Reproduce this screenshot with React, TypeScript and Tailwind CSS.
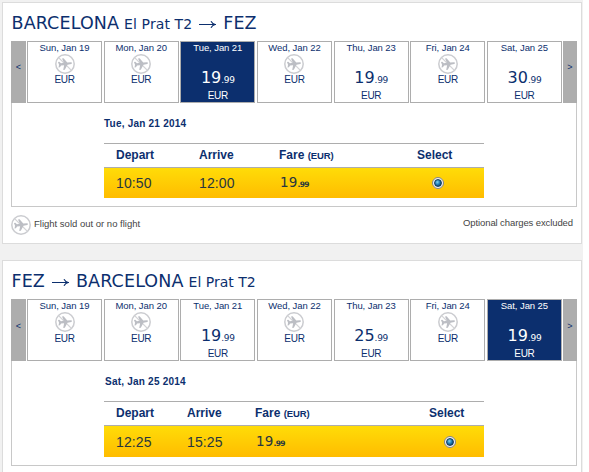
import React, { useState } from "react";
import clsx from "clsx";

type Day = { label: string; whole?: string; cents?: string };

type Leg = {
  id: string;
  title: React.ReactNode;
  days: Day[];
  selected: number;
  date: string;
  depart: string;
  arrive: string;
  fare: string;
};

const Big = ({ children }: { children: string }) => (
  <span className="text-[17.5px] tracking-[0.12px]">{children}</span>
);

const Arrow = () => (
  <svg
    className="mx-[7px] mb-[1px] inline-block h-[9px] w-[17px] align-baseline"
    viewBox="0 0 17 9"
    fill="none"
    stroke="#0c2f6e"
    strokeWidth="1.2"
  >
    <path d="M0 4.5H16M12 1.2C13 3 14.4 4 16.2 4.5C14.4 5 13 6 12 7.8" />
  </svg>
);

const legs: Leg[] = [
  {
    id: "out",
    title: (
      <>
        <Big>BARCELONA</Big>
        <span className="ml-[5px] tracking-[0.1px]">El Prat T2</span>
        <Arrow />
        <Big>FEZ</Big>
      </>
    ),
    days: [
      { label: "Sun, Jan 19" },
      { label: "Mon, Jan 20" },
      { label: "Tue, Jan 21", whole: "19", cents: ".99" },
      { label: "Wed, Jan 22" },
      { label: "Thu, Jan 23", whole: "19", cents: ".99" },
      { label: "Fri, Jan 24" },
      { label: "Sat, Jan 25", whole: "30", cents: ".99" },
    ],
    selected: 2,
    date: "Tue, Jan 21 2014",
    depart: "10:50",
    arrive: "12:00",
    fare: "19",
  },
  {
    id: "back",
    title: (
      <>
        <Big>FEZ</Big>
        <Arrow />
        <Big>BARCELONA</Big>
        <span className="ml-[5px]">El Prat T2</span>
      </>
    ),
    days: [
      { label: "Sun, Jan 19" },
      { label: "Mon, Jan 20" },
      { label: "Tue, Jan 21", whole: "19", cents: ".99" },
      { label: "Wed, Jan 22" },
      { label: "Thu, Jan 23", whole: "25", cents: ".99" },
      { label: "Fri, Jan 24" },
      { label: "Sat, Jan 25", whole: "19", cents: ".99" },
    ],
    selected: 6,
    date: "Sat, Jan 25 2014",
    depart: "12:25",
    arrive: "15:25",
    fare: "19",
  },
];

const NoFlight = () => (
  <svg className="size-5 shrink-0" viewBox="0 0 20 20">
    <circle cx="10" cy="10" r="9.2" fill="#fff" stroke="#cbccd0" strokeWidth="1.5" />
    <path d="M3.6 3.6L16.4 16.4" stroke="#d3d4d7" strokeWidth="1.3" />
    <path
      fill="#bcbec4"
      d="M16.2 8.9C17.3 9 17.3 10.4 16.2 10.6L12.4 11L9.2 15.8H7.6L9 11.2L6 11L4.6 12.7H3.2L4 10L3.2 7.2H4.6L6 8.8L9 8.7L7.6 4.2H9.2L12.4 8.8Z"
      transform="rotate(-6 10 10)"
    />
  </svg>
);

const DayCell = ({
  day,
  active,
  low,
  onClick,
}: {
  day: Day;
  active: boolean;
  low: boolean;
  onClick: () => void;
}) => (
  <button
    onClick={onClick}
    className={clsx(
      "flex w-[75px] flex-col items-center border border-[#adadad] text-[10px] whitespace-nowrap",
      active ? "bg-[#0c2f6e] text-white" : "bg-white text-[#0c2f6e]"
    )}
  >
    <span className="h-3 text-[9.5px] leading-[12px] tracking-[-0.08px]">{day.label}</span>
    {day.whole ? (
      <>
        <span className="h-[29px] pt-[14px] font-['DejaVu_Sans',sans-serif] text-[16px] leading-[19px]">
          {day.whole}
          <span className="text-[9px] tracking-[-0.3px]">{day.cents}</span>
        </span>
        <span className="h-[18px] pt-[7px] leading-[12px] tracking-[-0.3px]">EUR</span>
      </>
    ) : (
      <>
        <NoFlight />
        <span className={clsx("leading-[12px] tracking-[-0.3px]", low && "pt-px")}>EUR</span>
      </>
    )}
  </button>
);

const FlightTable = ({ leg, first }: { leg: Leg; first: boolean }) => {
  const cols = first
    ? "grid-cols-[83px_80px_138px_1fr]"
    : "grid-cols-[71px_68px_174px_1fr]";
  return (
    <div className="ml-[92px] w-[380px] border-t border-[#adadad] text-[#0c2f6e]">
      <div
        className={clsx(
          "grid h-6 border-b border-[#adadad] pl-3 text-[12px] leading-[23px] font-bold",
          cols
        )}
      >
        <span>Depart</span>
        <span>Arrive</span>
        <span>
          Fare <span className="text-[9.5px] tracking-[-0.1px]">(EUR)</span>
        </span>
        <span>Select</span>
      </div>
      <div
        className={clsx(
          "grid bg-linear-to-b from-[#ffdc08] to-[#ffbc00] pl-3 text-[14px] tracking-[0.1px] text-[#27363f]",
          first ? "h-[30px] leading-[31px]" : "h-[31px] leading-[32px]",
          cols
        )}
      >
        <span>{leg.depart}</span>
        <span>{leg.arrive}</span>
        <span className="-mt-px pl-px font-['DejaVu_Sans',sans-serif] text-[13.5px]">
          {leg.fare}
          <span className="text-[7.5px] font-bold tracking-[-0.6px]">.99</span>
        </span>
        <span
          className={clsx("flex items-center pl-[15px]", first ? "h-[30px]" : "h-[32px]")}
        >
          <span className="flex size-3 items-center justify-center rounded-full border border-[#858585] bg-[#f4f4f4]">
            <span className="size-2 rounded-full border border-[#123b5c] bg-radial-[at_40%_35%] from-[#7fd3f3] via-[#1773ad] to-[#0a2742]" />
          </span>
        </span>
      </div>
    </div>
  );
};

const LegPanel = ({ leg, first }: { leg: Leg; first: boolean }) => {
  const [selected, setSelected] = useState(leg.selected);
  const nav = clsx(
    "flex items-center justify-center bg-[#adadad] text-[9px] text-[#0c2f6e]",
    first ? "pb-[9px]" : "pb-[7px]"
  );
  return (
    <section
      className={clsx(
        "ml-[2px] w-[580px] border border-[#dcdcdc] bg-white pl-2",
        first ? "h-[242px]" : "mt-[16px] h-[240px]"
      )}
    >
      <h2 className="flex h-[38px] items-baseline pl-[0.5px] font-['DejaVu_Sans',sans-serif] text-[14px] leading-[40px] text-[#0c2f6e]">
        {leg.title}
      </h2>
      <div
        className={clsx(
          "w-[566px] border border-t-0 border-[#c8c8c8]",
          first ? "h-[166px]" : "h-[167px]"
        )}
      >
        <div className="-mx-px flex h-[62px] justify-between">
          <button className={clsx(nav, "w-[15px]")}>&lt;</button>
          <div className="flex w-[535px] justify-between">
            {leg.days.map((day, i) => (
              <DayCell
                key={day.label}
                day={day}
                active={i === selected}
                low={!first}
                onClick={() => setSelected(i)}
              />
            ))}
          </div>
          <button className={clsx(nav, "w-[14px]")}>&gt;</button>
        </div>
        <p
          className={clsx(
            "mt-[14px] mb-[12px] h-[14px] text-[10px] leading-[14px] font-bold tracking-[0.22px] text-[#0c2f6e]",
            first ? "ml-[92px]" : "ml-[93px]"
          )}
        >
          {leg.date}
        </p>
        <FlightTable leg={leg} first={first} />
      </div>
      {first && (
        <div className="mt-[8px] flex w-[562px] items-center justify-between text-[9.5px] text-[#444]">
          <span className="flex items-center gap-[3px]">
            <NoFlight />
            <span className="-mt-[2px]">Flight sold out or no flight</span>
          </span>
          <span className="-mt-[3px] tracking-[-0.1px]">Optional charges excluded</span>
        </div>
      )}
    </section>
  );
};

export default function App() {
  return (
    <div className="h-[472px] w-[589px] overflow-hidden bg-white font-['Liberation_Sans',Arial,sans-serif]">
      <main className="h-full w-[583px] bg-[#f1f1f1] pt-[2px]">
        {legs.map((leg, i) => (
          <LegPanel key={leg.id} leg={leg} first={i === 0} />
        ))}
      </main>
    </div>
  );
}
